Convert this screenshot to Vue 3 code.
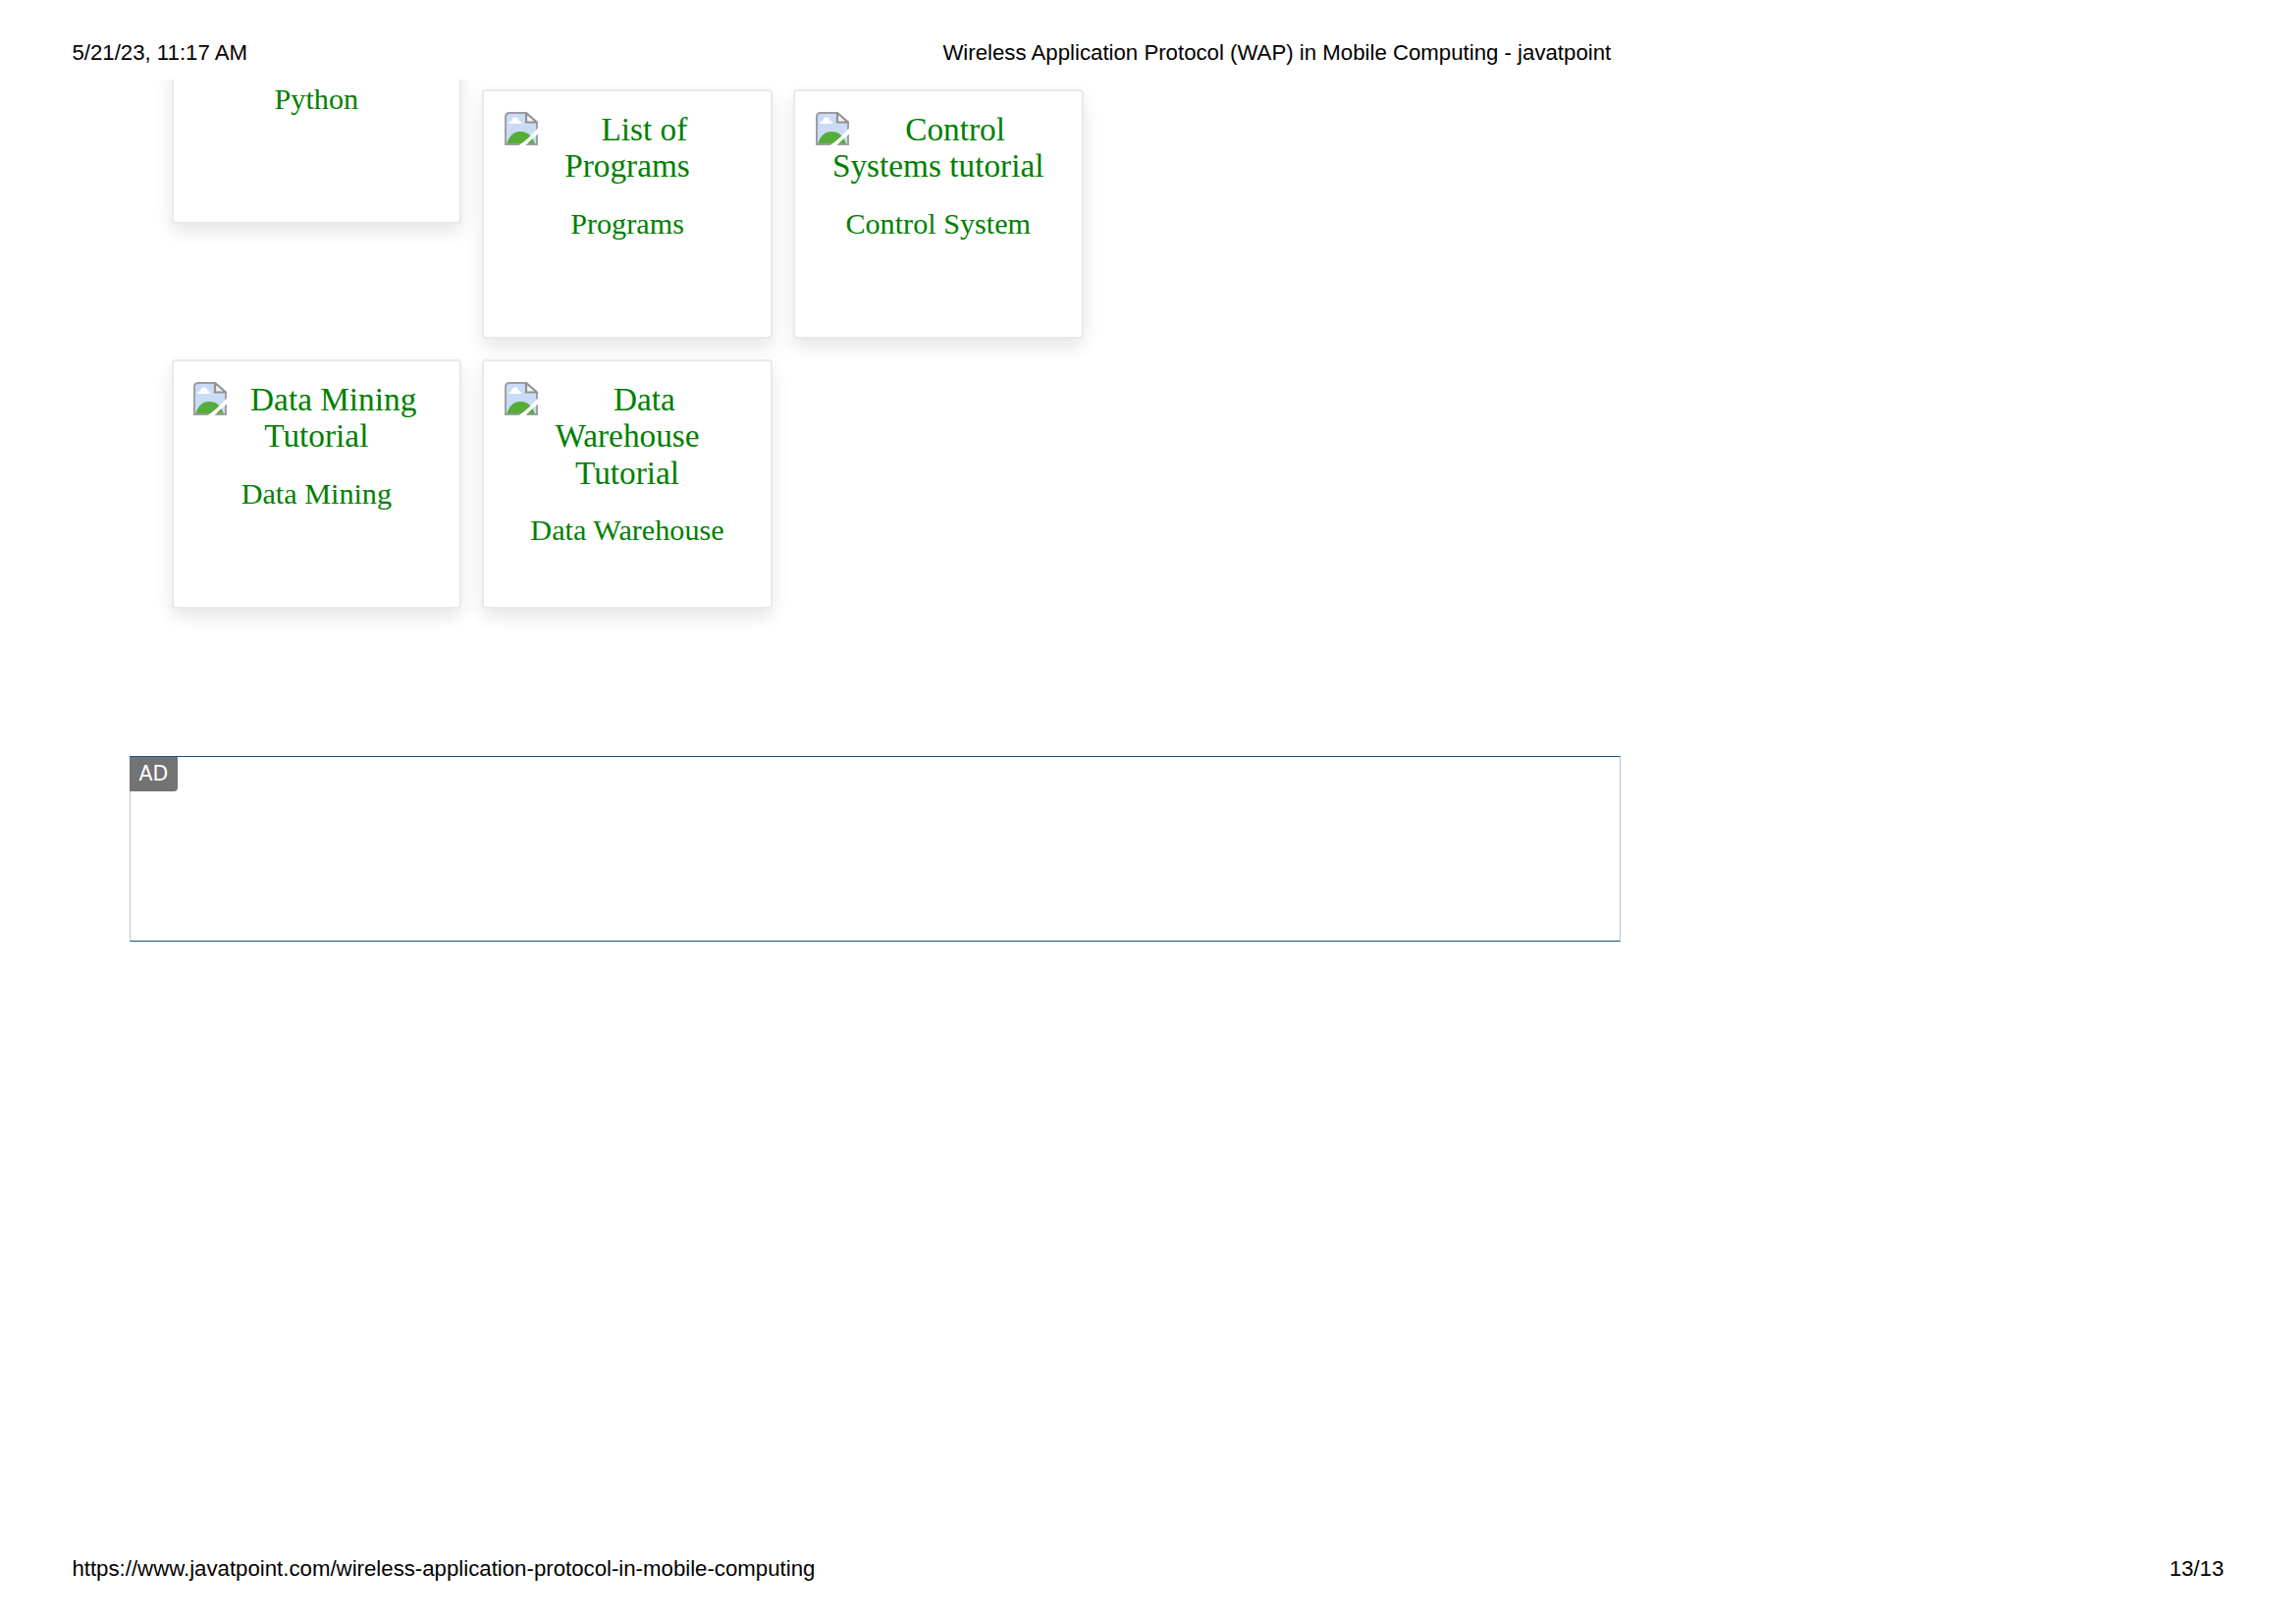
<script setup>
const columns = [
  [
    { lines: [], label: 'Python', cut: true },
    { lines: ['Data Mining', 'Tutorial'], label: 'Data Mining' },
  ],
  [
    { lines: ['List of', 'Programs'], label: 'Programs' },
    { lines: ['Data', 'Warehouse', 'Tutorial'], label: 'Data Warehouse' },
  ],
  [{ lines: ['Control', 'Systems tutorial'], label: 'Control System' }],
]
</script>

<template>
  <div class="page">
    <header class="top">
      <span class="date">5/21/23, 11:17 AM</span>
      <span>Wireless Application Protocol (WAP) in Mobile Computing - javatpoint</span>
    </header>
    <main class="sheet">
      <section class="columns">
        <div v-for="(column, i) in columns" :key="i" class="column">
          <article v-for="card in column" :key="card.label" class="card" :class="{ cut: card.cut }">
            <div v-if="card.lines.length" class="title">
              <svg class="broken" viewBox="0 0 34 34">
                <path d="M5 1H22L33 11V33H1V5Q1 1 5 1Z" fill="#c9dbf6" />
                <path d="M4 12q0-2.500 3-2.500q1-4.500 4-4q3 0 3.500 3.500q3 .5 3 3z" fill="#fff" />
                <path d="M2 33Q6 20 16 20Q27 20 31 33Z" fill="#55ad38" />
                <path d="M22 1H5Q1 1 1 5V33H33V11" fill="none" stroke="#9c9ca0" stroke-width="1.900" />
                <path d="M22 1V10.500H33Z" fill="#f4f4f4" stroke="#929292" stroke-width="2.200" />
                <path d="M14 34.500Q24 28 34.500 16V22Q27 28 21 34.500Z" fill="#fff" />
              </svg>
              <div v-for="line in card.lines" :key="line" class="line">{{ line }}</div>
            </div>
            <div class="label">{{ card.label }}</div>
          </article>
        </div>
      </section>
      <section class="ad"><span class="badge">AD</span></section>
    </main>
    <footer class="bottom">
      <span>https://www.javatpoint.com/wireless-application-protocol-in-mobile-computing</span>
      <span>13/13</span>
    </footer>
  </div>
</template>

<style>
body {
  background: #fff;
}
</style>

<style scoped>
.page {
  box-sizing: border-box;
  width: 2339px;
  height: 1653px;
  overflow: hidden;
  display: flex;
  flex-direction: column;
  font: 22.23px/26px "Liberation Sans", Arial, sans-serif;
  color: #000;
  background: #fff;
}
.top {
  height: 81px;
  flex: none;
  box-sizing: border-box;
  padding: 41px 0 0 73.4px;
  display: flex;
  white-space: nowrap;
}
.date {
  width: 887px;
}
.sheet {
  flex: 1;
  overflow: hidden;
}
.columns {
  display: flex;
  gap: 21px;
  padding-left: 174.5px;
  height: 689px;
  box-sizing: border-box;
}
.column {
  padding-top: 10px;
  display: flex;
  flex-direction: column;
  gap: 21px;
}
.column:first-child {
  padding-top: 0;
  gap: 138px;
}
.card {
  box-sizing: border-box;
  width: 295.7px;
  height: 254px;
  border: 2px solid #e9e9e9;
  border-radius: 4px;
  padding: 20px 20px 0;
  background: #fff;
  box-shadow: 0 8px 18px rgba(0, 0, 0, 0.1);
  font-family: "Liberation Serif", "Times New Roman", serif;
  color: #008000;
  text-align: center;
}
.card.cut {
  height: 167px;
  margin-top: -20px;
  padding-top: 21px;
  border-radius: 0 0 4px 4px;
}
.title {
  font-size: 33.3px;
  line-height: 37.4px;
  white-space: nowrap;
}
.broken {
  float: left;
  display: block;
  width: 34px;
  height: 34px;
  margin: 1px 0 0 0.7px;
}
.label {
  font-size: 30.2px;
  line-height: 34px;
}
.title + .label {
  margin-top: 23.2px;
}
.ad {
  box-sizing: border-box;
  width: 1519px;
  height: 189px;
  margin-left: 132px;
  border: 1px solid #b4c5d6;
  border-top-color: #1c4d7a;
  border-bottom-color: #1c4d7a;
}
.badge {
  display: block;
  width: 49px;
  height: 36px;
  margin: -1px 0 0 -1px;
  border-top: 1px solid #1c4d7a;
  box-sizing: border-box;
  border-radius: 0 0 4px 0;
  background: #737373;
  color: #fff;
  text-align: center;
  font: 20.5px/34px "DejaVu Sans", Verdana, sans-serif;
}
.bottom {
  flex: none;
  display: flex;
  justify-content: space-between;
  padding: 0 73.5px 42px 73.4px;
}
</style>
